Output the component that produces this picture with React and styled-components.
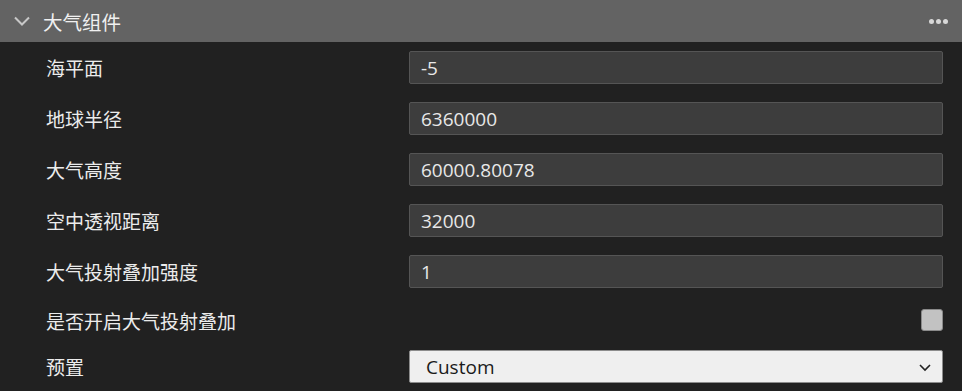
import React from "react";
import styled, { createGlobalStyle } from "styled-components";

const GlobalStyle = createGlobalStyle`
  html, body {
    margin: 0;
    padding: 0;
    background: #212121;
  }
  body {
    font-family: "Noto Sans CJK SC", "Noto Sans", sans-serif;
  }
`;

const Panel = styled.div`
  width: 962px;
  height: 391px;
  background: #212121;
  overflow: hidden;
`;

const Header = styled.div`
  height: 42px;
  background: #636363;
  display: flex;
  align-items: center;
  padding: 0 14px 0 12px;
  color: #f0f0f0;
  font-size: 19.5px;
`;

const Title = styled.span`
  flex: 1;
  margin-left: 11px;
`;

const Dots = styled.div`
  display: flex;
  gap: 2px;
  span {
    width: 5px;
    height: 5px;
    border-radius: 50%;
    background: #d8d8d8;
  }
`;

const Body = styled.div`
  padding: 9px 19px 0 46px;
  display: flex;
  flex-direction: column;
  gap: 18px;
`;

const Row = styled.div`
  display: grid;
  grid-template-columns: 363px 1fr;
  align-items: center;
  height: ${p => p.$h || 33}px;
  margin-top: ${p => p.$mt || 0}px;
`;

const Label = styled.span`
  color: #ececec;
  font-size: 19px;
  line-height: 1;
`;

const Input = styled.div`
  height: 33px;
  box-sizing: border-box;
  background: #3d3d3d;
  border: 1px solid #555555;
  border-radius: 2px;
  display: flex;
  align-items: center;
  padding-left: 11px;
  color: #e8e8e8;
  font-family: "Open Sans", "Noto Sans", sans-serif;
  font-size: 19px;
`;

const Check = styled.div`
  justify-self: end;
  width: 22px;
  height: 22px;
  box-sizing: border-box;
  background: #c2c2c2;
  border: 1px solid #8a8a8a;
  border-radius: 3px;
`;

const Select = styled.div`
  height: 33px;
  box-sizing: border-box;
  background: #efefef;
  border: 1px solid #8c8c8c;
  border-radius: 2px;
  display: flex;
  align-items: center;
  justify-content: space-between;
  padding: 0 10px 0 16px;
  color: #1a1a1a;
  font-family: "Open Sans", "Noto Sans", sans-serif;
  font-size: 19px;
`;

const fields = [
  ["海平面", "-5"],
  ["地球半径", "6360000"],
  ["大气高度", "60000.80078"],
  ["空中透视距离", "32000"],
  ["大气投射叠加强度", "1"],
];

export default function App() {
  return (
    <Panel>
      <GlobalStyle />
      <Header>
        <svg width="20" height="20" viewBox="0 0 20 20">
          <path d="M3 6.5 L10 13.5 L17 6.5" fill="none" stroke="#c8c8c8" strokeWidth="2" />
        </svg>
        <Title>大气组件</Title>
        <Dots>
          <span />
          <span />
          <span />
        </Dots>
      </Header>
      <Body>
        {fields.map(([label, value]) => (
          <Row key={label}>
            <Label>{label}</Label>
            <Input>{value}</Input>
          </Row>
        ))}
        <Row $h={22} $mt={3}>
          <Label>是否开启大气投射叠加</Label>
          <Check />
        </Row>
        <Row $mt={1}>
          <Label>预置</Label>
          <Select>
            Custom
            <svg width="14" height="10" viewBox="0 0 14 10">
              <path d="M2 3 L7 8 L12 3" fill="none" stroke="#222" strokeWidth="1.6" />
            </svg>
          </Select>
        </Row>
      </Body>
    </Panel>
  );
}
